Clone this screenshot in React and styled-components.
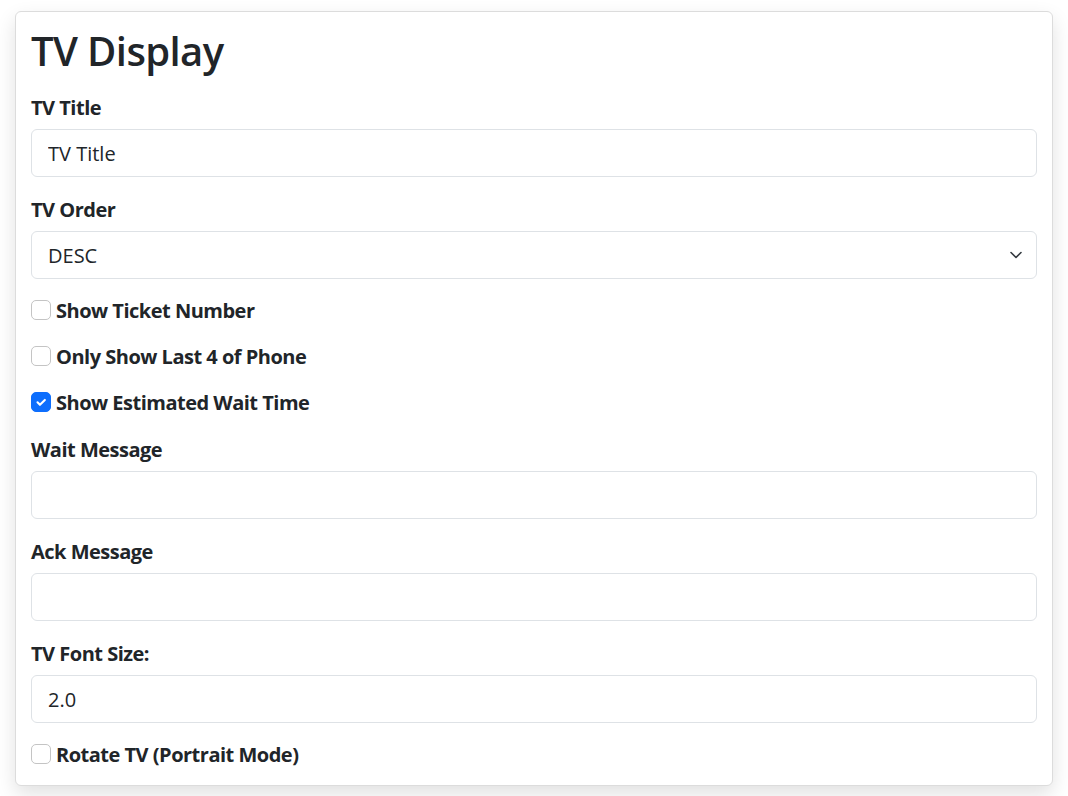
import React, { useState } from "react";
import styled, { createGlobalStyle } from "styled-components";

const GlobalStyle = createGlobalStyle`
  * { box-sizing: border-box; }
  body {
    margin: 0;
    background: #fff;
    font-family: "Open Sans", "Noto Sans", sans-serif;
    color: #212529;
  }
`;

const Page = styled.div`
  padding: 11px 15px 11px 15px;
`;

const Card = styled.form`
  background: #fff;
  border: 1px solid #dcdcdc;
  border-radius: 6px;
  box-shadow: 0 8px 20px rgba(0, 0, 0, 0.12);
  padding: 15px 15px 16px;
  display: flex;
  flex-direction: column;
`;

const Title = styled.h2`
  margin: 0 0 16px;
  font-size: 40px;
  font-weight: 600;
  letter-spacing: -0.6px;
  line-height: 48px;
  padding-top: 2px;
  margin-top: -2px;
`;

const Group = styled.div`
  display: flex;
  flex-direction: column;
  margin-bottom: 16px;
`;

const Label = styled.label`
  display: block;
  font-size: 20px;
  font-weight: 700;
  line-height: 30px;
  letter-spacing: -0.5px;
  padding-top: 2px;
  margin-bottom: 6px;
`;

const Input = styled.input`
  display: block;
  width: 100%;
  height: 48px;
  padding: 0 16px 0 16px;
  font-family: inherit;
  font-size: 20px;
  color: #212529;
  background: #fff;
  border: 1px solid #dee2e6;
  border-radius: 6px;
  outline: none;
`;

const SelectWrap = styled.div`
  position: relative;
`;

const Select = styled.select`
  display: block;
  width: 100%;
  height: 48px;
  padding: 0 48px 0 16px;
  font-family: inherit;
  font-size: 20px;
  color: #212529;
  background: #fff;
  border: 1px solid #dee2e6;
  border-radius: 6px;
  appearance: none;
  -webkit-appearance: none;
  outline: none;
`;

const Chevron = styled.svg`
  position: absolute;
  right: 15px;
  top: 50%;
  margin-top: -4px;
  width: 12px;
  height: 8px;
  pointer-events: none;
`;

const CheckRow = styled.label`
  display: flex;
  align-items: center;
  gap: 5px;
  height: 30px;
  margin-bottom: ${(p) => (p.$last ? "0" : "16px")};
  font-size: 20px;
  font-weight: 700;
  letter-spacing: -0.5px;
  cursor: pointer;
`;

const HiddenCheck = styled.input`
  position: absolute;
  opacity: 0;
  width: 0;
  height: 0;
`;

const Box = styled.span`
  flex: none;
  width: 20px;
  height: 20px;
  border-radius: 5px;
  border: 1px solid ${(p) => (p.$checked ? "#0d6efd" : "#c4c4c4")};
  background: ${(p) => (p.$checked ? "#0d6efd" : "#fff")};
  display: flex;
  align-items: center;
  justify-content: center;
`;

function Check({ label, defaultChecked, last }) {
  const [on, setOn] = useState(!!defaultChecked);
  return (
    <CheckRow $last={last}>
      <HiddenCheck type="checkbox" checked={on} onChange={() => setOn(!on)} />
      <Box $checked={on}>
        {on && (
          <svg width="14" height="14" viewBox="0 0 20 20" fill="none">
            <path
              d="M5 10.5l3.5 3.5L15.5 7"
              stroke="#fff"
              strokeWidth="3"
              strokeLinecap="round"
              strokeLinejoin="round"
            />
          </svg>
        )}
      </Box>
      {label}
    </CheckRow>
  );
}

export default function App() {
  return (
    <>
      <GlobalStyle />
      <Page>
        <Card onSubmit={(e) => e.preventDefault()}>
          <Title>TV Display</Title>
          <Group>
            <Label htmlFor="tvTitle">TV Title</Label>
            <Input id="tvTitle" type="text" defaultValue="TV Title" />
          </Group>
          <Group>
            <Label htmlFor="tvOrder">TV Order</Label>
            <SelectWrap>
              <Select id="tvOrder" defaultValue="DESC">
                <option value="ASC">ASC</option>
                <option value="DESC">DESC</option>
              </Select>
              <Chevron viewBox="0 0 12 8" fill="none">
                <path
                  d="M1 1.5l5 5 5-5"
                  stroke="#343a40"
                  strokeWidth="1.6"
                  strokeLinecap="round"
                  strokeLinejoin="round"
                />
              </Chevron>
            </SelectWrap>
          </Group>
          <Check label="Show Ticket Number" />
          <Check label="Only Show Last 4 of Phone" />
          <Check label="Show Estimated Wait Time" defaultChecked />
          <Group>
            <Label htmlFor="waitMsg">Wait Message</Label>
            <Input id="waitMsg" type="text" defaultValue="" />
          </Group>
          <Group>
            <Label htmlFor="ackMsg">Ack Message</Label>
            <Input id="ackMsg" type="text" defaultValue="" />
          </Group>
          <Group>
            <Label htmlFor="fontSize">TV Font Size:</Label>
            <Input id="fontSize" type="text" defaultValue="2.0" />
          </Group>
          <Check label="Rotate TV (Portrait Mode)" last />
        </Card>
      </Page>
    </>
  );
}
